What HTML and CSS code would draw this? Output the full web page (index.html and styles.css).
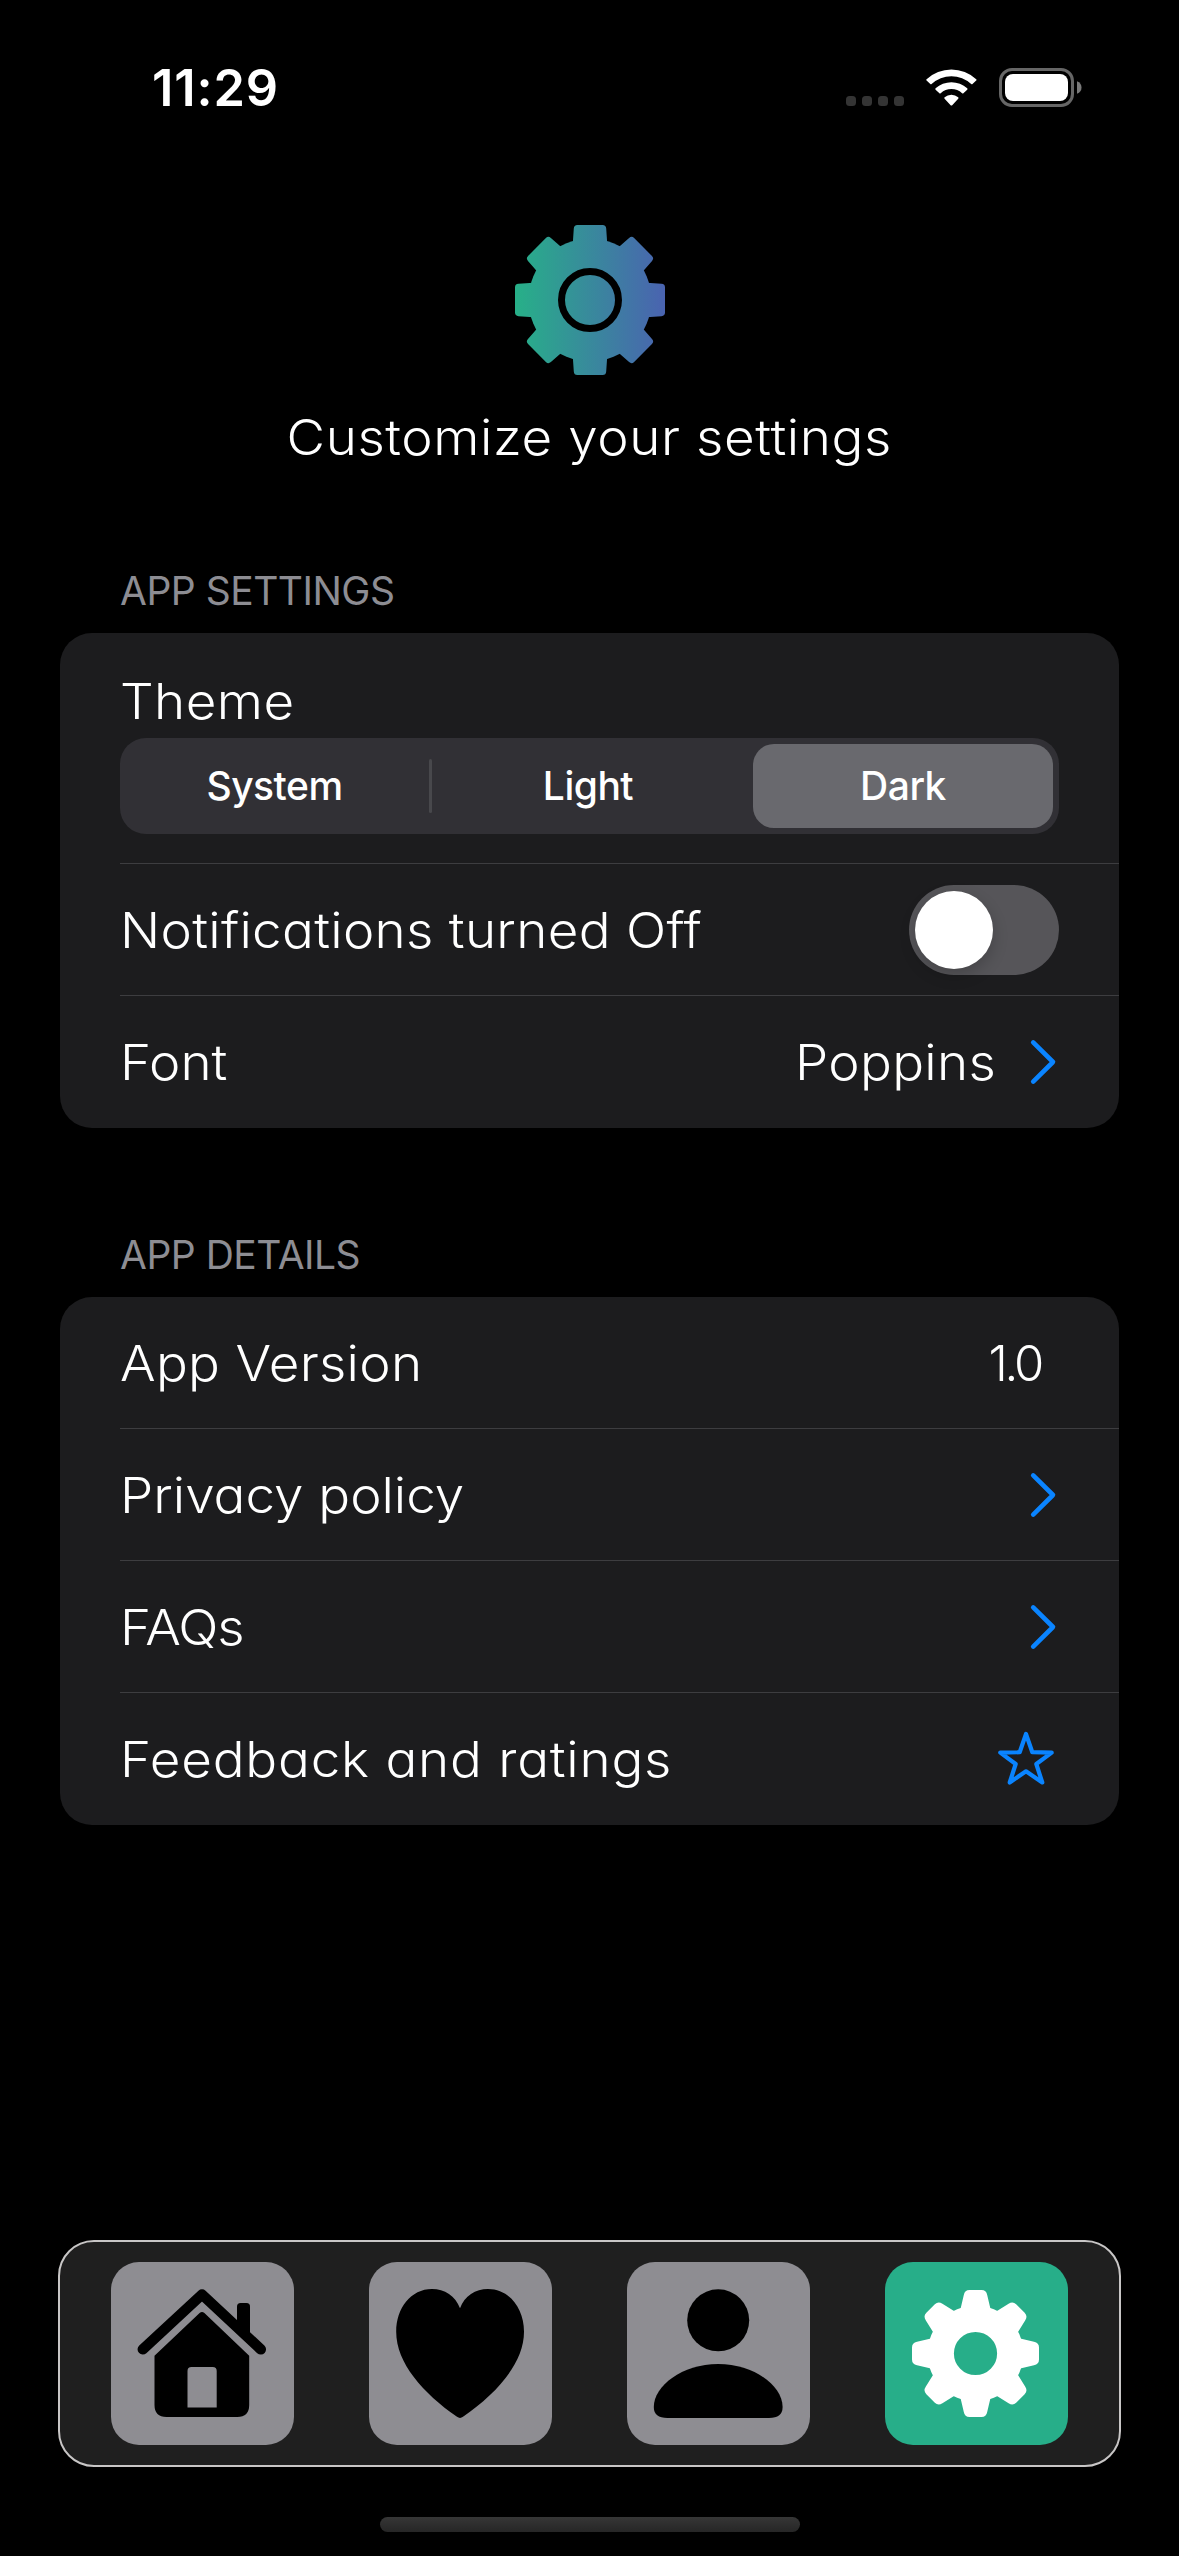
FILE: index.html
```
<!DOCTYPE html>
<html lang="en">
<head>
<meta charset="utf-8">
<title>Settings</title>
<link rel="stylesheet" href="styles.css">
</head>
<body>
<svg class="defs" aria-hidden="true">
  <symbol id="chevron" viewBox="0 0 32 48">
    <path d="M6.200 4.400 L26 24 L6.200 43.600"/>
  </symbol>
</svg>
<div class="screen">
  <header class="status">
    <span class="time">11:29</span>
    <svg class="status-icons" width="240" height="44" viewBox="0 0 240 44">
      <g fill="#343434">
        <rect x="4" y="30" width="10" height="10" rx="3.500"/>
        <rect x="20" y="30" width="10" height="10" rx="3.500"/>
        <rect x="36" y="30" width="10" height="10" rx="3.500"/>
        <rect x="52" y="30" width="10" height="10" rx="3.500"/>
      </g>
      <g fill="#fff">
        <path d="M84.600 13.200 A36.500 36.500 0 0 1 134.200 13.200 Q134.900 13.900 134.200 14.600 L130.500 18.100 Q129.900 18.600 129.200 18 A29 29 0 0 0 89.600 18 Q88.900 18.600 88.300 18.100 L84.600 14.600 Q83.900 13.900 84.600 13.200Z"/>
        <path d="M93.600 22.300 A23.500 23.500 0 0 1 125.200 22.300 Q125.900 23 125.200 23.700 L121.400 27.300 Q120.800 27.800 120.100 27.200 A16 16 0 0 0 98.700 27.200 Q98 27.800 97.400 27.300 L93.600 23.700 Q92.900 23 93.600 22.300Z"/>
        <path d="M102.600 31.300 A10.500 10.500 0 0 1 116.200 31.300 Q116.900 32 116.200 32.700 L110.200 39.200 Q109.400 40 108.600 39.200 L102.600 32.700 Q101.900 32 102.600 31.300Z"/>
      </g>
      <rect x="158.500" y="3.500" width="72" height="36" rx="11.500" fill="none" stroke="#666" stroke-width="3"/>
      <rect x="163" y="8" width="63" height="27" rx="8" fill="#fff"/>
      <path d="M235 15.200 Q239.500 17 239.500 21.500 Q239.500 26 235 27.800Z" fill="#7a7a7a"/>
    </svg>
  </header>

  <section class="hero">
    <svg width="150" height="150" viewBox="-75 -75 150 150">
      <defs>
        <linearGradient id="brand" x1="0" x2="1"><stop offset="0" stop-color="#27b088"/><stop offset="1" stop-color="#4a63b0"/></linearGradient>
        <path id="tooth" d="M-18 -45 L-16.200 -71.500 Q-16 -75 -12.600 -75 H12.600 Q16 -75 16.200 -71.500 L18 -45Z"/>
        <mask id="cog" maskUnits="userSpaceOnUse" x="-75" y="-75" width="150" height="150">
          <g fill="#fff">
            <circle r="61.400"/>
            <use href="#tooth"/><use href="#tooth" transform="rotate(45)"/><use href="#tooth" transform="rotate(90)"/><use href="#tooth" transform="rotate(135)"/>
            <use href="#tooth" transform="rotate(180)"/><use href="#tooth" transform="rotate(225)"/><use href="#tooth" transform="rotate(270)"/><use href="#tooth" transform="rotate(315)"/>
          </g>
          <circle r="28.500" fill="none" stroke="#000" stroke-width="7"/>
        </mask>
      </defs>
      <rect x="-75" y="-75" width="150" height="150" fill="url(#brand)" mask="url(#cog)"/>
    </svg>
    <h1 class="subtitle">Customize your settings</h1>
  </section>

  <main class="groups">
    <section>
      <h2 class="heading">APP SETTINGS</h2>
      <div class="card">
        <div class="row row-theme">
          <span class="label ls-theme">Theme</span>
          <div class="segments">
            <span class="seg seg-first">System</span>
            <i class="seg-line"></i>
            <span class="seg seg-mid">Light</span>
            <span class="seg seg-on">Dark</span>
          </div>
        </div>
        <div class="row">
          <span class="label">Notifications turned Off</span>
          <span class="toggle"><i class="knob"></i></span>
        </div>
        <div class="row">
          <span class="label ls-none">Font</span>
          <span class="label value">Poppins</span>
          <svg class="chev" width="32" height="48"><use href="#chevron"/></svg>
        </div>
      </div>
    </section>
    <section>
      <h2 class="heading">APP DETAILS</h2>
      <div class="card">
        <div class="row">
          <span class="label">App Version</span>
          <span class="label version">1.0</span>
        </div>
        <div class="row">
          <span class="label ls-none">Privacy policy</span>
          <svg class="chev" width="32" height="48"><use href="#chevron"/></svg>
        </div>
        <div class="row">
          <span class="label ls-tight">FAQs</span>
          <svg class="chev" width="32" height="48"><use href="#chevron"/></svg>
        </div>
        <div class="row">
          <span class="label ls-wide">Feedback and ratings</span>
          <svg class="star" width="66" height="60" viewBox="0 0 66 60">
            <path d="M33 5 L39.300 23.200 L58.700 23.600 L43.300 35 L49.300 53.500 L33 42.300 L16.700 53.500 L22.700 35 L7.300 23.600 L26.700 23.200Z"/>
          </svg>
        </div>
      </div>
    </section>
  </main>

  <nav class="tabs">
    <a class="tab"><svg width="183" height="183" viewBox="0 0 183 183">
      <path d="M31.800 87.300 L91 32.500 L149.800 87.300" fill="none" stroke="#000" stroke-width="10.500" stroke-linecap="round" stroke-linejoin="round"/>
      <path d="M126 60 V44.500 Q126 41 129.500 41 H135.500 Q139 41 139 44.500 V76 L126 66Z"/>
      <path fill-rule="evenodd" d="M88.600 51 Q91 49 93.400 51 L138.200 93.700 V143 Q138.200 155 126.200 155 H55.500 Q43.500 155 43.500 143 V93.700Z M76.500 145.500 H105.700 V109 Q105.700 105 101.700 105 H80.500 Q76.500 105 76.500 109Z"/>
    </svg></a>
    <a class="tab"><svg width="183" height="183" viewBox="0 0 183 183">
      <path d="M91 46.300 C86.500 34 75.500 27 63 27 C42 27 27.200 46 27.200 69.700 C27.200 101 54 131 88 154.800 Q91 157 94 154.800 C128 131 155 101 155 69.700 C155 46 140 27 119 27 C106.500 27 95.500 34 91 46.300Z"/>
    </svg></a>
    <a class="tab"><svg width="183" height="183" viewBox="0 0 183 183">
      <circle cx="91.200" cy="58.300" r="31"/>
      <path d="M26.800 145 C26.800 124 55 102 91.200 102 C127.400 102 155.600 124 155.600 145 Q155.600 156 142 156 H40.500 Q26.800 156 26.800 145Z"/>
    </svg></a>
    <a class="tab tab-on"><svg width="183" height="183" viewBox="-90.500 -91.500 183 183">
      <defs><path id="nub" d="M-17 -36 L-11.700 -58.500 Q-10.800 -63.500 -6 -63.500 H6 Q10.800 -63.500 11.700 -58.500 L17 -36Z"/></defs>
      <g fill="#fff">
        <circle r="34.700" fill="none" stroke="#fff" stroke-width="26.200"/>
        <use href="#nub"/><use href="#nub" transform="rotate(45)"/><use href="#nub" transform="rotate(90)"/><use href="#nub" transform="rotate(135)"/>
        <use href="#nub" transform="rotate(180)"/><use href="#nub" transform="rotate(225)"/><use href="#nub" transform="rotate(270)"/><use href="#nub" transform="rotate(315)"/>
      </g>
    </svg></a>
  </nav>
  <div class="home-indicator"></div>
</div>
</body>
</html>
```
FILE: styles.css
```
* { box-sizing: border-box; margin: 0; }

body {
  background: #000;
  color: #fff;
  font-family: Inter, "Liberation Sans", sans-serif;
}

.defs { display: none; }
svg { display: block; flex: none; }

.screen {
  width: 1179px;
  height: 2556px;
  display: flex;
  flex-direction: column;
  align-items: center;
  overflow: hidden;
}

/* Status bar */
.status {
  width: 100%;
  height: 225px;
  padding: 66px 97px 0 152px;
  display: flex;
  justify-content: space-between;
  align-items: flex-start;
}
.time {
  font-size: 50.500px;
  font-weight: 600;
  line-height: 44px;
  letter-spacing: 0.900px;
}

/* Title area */
.hero {
  display: flex;
  flex-direction: column;
  align-items: center;
  gap: 28px;
  margin-bottom: 94px;
}

/* Light geometric text, slightly extended */
.subtitle, .label {
  font-size: 49px;
  font-weight: 300;
  line-height: 70px;
  letter-spacing: 0.280px;
  font-feature-settings: "cv11";
  white-space: nowrap;
  transform: scaleX(1.080);
  transform-origin: left center;
}
.subtitle { letter-spacing: 0.550px; transform-origin: center; }

/* Grouped lists */
.groups {
  width: 1059px;
  display: flex;
  flex-direction: column;
  gap: 103px;
}
.heading {
  padding-left: 60px;
  margin-bottom: 18px;
  font-size: 39px;
  font-weight: 400;
  line-height: 48px;
  letter-spacing: -0.500px;
  color: #8d8d93;
}
.card {
  background: #1c1c1e;
  border-radius: 32px;
  padding-left: 60px;
}
.row {
  height: 132px;
  padding-right: 60px;
  display: flex;
  align-items: center;
  justify-content: space-between;
  border-bottom: 1px solid #3d3d40;
}
.row:last-child { border-bottom: 0; }
.row .label { padding-top: 2px; }

.row-theme {
  height: 231px;
  padding-top: 34px;
  flex-direction: column;
  align-items: stretch;
  justify-content: flex-start;
}
.row-theme .label { height: 71px; padding-top: 0; }

.ls-theme { letter-spacing: 0.400px; }
.ls-none { letter-spacing: 0; }
.ls-tight { letter-spacing: -1px; }
.ls-wide { letter-spacing: 0.720px; }
.value { margin: 0 31px 0 auto; transform-origin: right center; }
.version { letter-spacing: -3.200px; margin-right: 18px; transform: none; }

.segments {
  height: 96px;
  padding-right: 6px;
  display: flex;
  align-items: center;
  border-radius: 26px;
  background: #313035;
}
.seg {
  font-size: 39px;
  font-weight: 500;
  line-height: 84px;
  letter-spacing: -0.500px;
  text-align: center;
}
.seg-first { width: 309px; }
.seg-mid { width: 312px; }
.seg-line {
  width: 3px;
  height: 54px;
  border-radius: 2px;
  background: #48484c;
}
.seg-on {
  width: 300px;
  margin-left: 9px;
  border-radius: 21px;
  background: #69696e;
}

.toggle {
  width: 150px;
  height: 90px;
  padding: 6px;
  border-radius: 45px;
  background: #565559;
}
.knob {
  display: block;
  width: 78px;
  height: 78px;
  border-radius: 50%;
  background: #fff;
  box-shadow: 0 6px 16px rgba(0, 0, 0, 0.200);
}

.chev, .star {
  fill: none;
  stroke: #0a84ff;
  stroke-linecap: round;
  stroke-linejoin: round;
  stroke-width: 4.600px;
}
.star { stroke-width: 4.200px; }

/* Tab bar */
.tabs {
  width: 1063px;
  height: 227px;
  margin-top: 415px;
  padding: 20px 51px;
  display: flex;
  justify-content: center;
  gap: 75px;
  border: 2px solid #c8c6c6;
  border-radius: 36px;
  background: #1f1f1f;
}
.tab {
  width: 183px;
  height: 183px;
  border-radius: 28px;
  background: #8e8d92;
}
.tab-on { background: #27ae89; }

.home-indicator {
  width: 420px;
  height: 15px;
  margin-top: 50px;
  border-radius: 8px;
  background: linear-gradient(#363636, #262626);
}
```
